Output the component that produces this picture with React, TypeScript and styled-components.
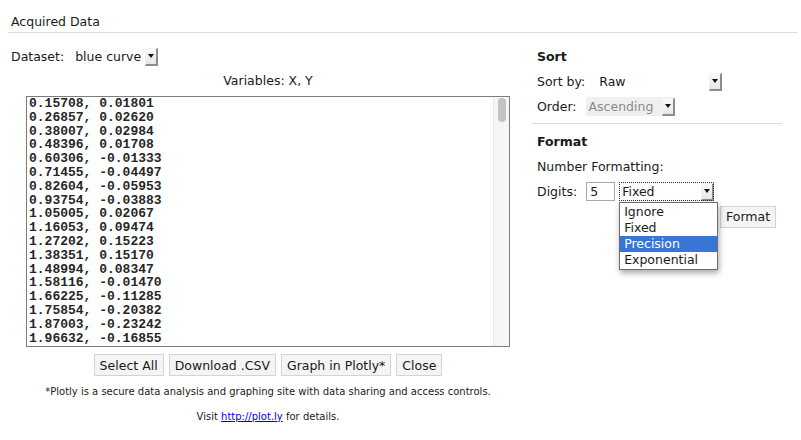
import React from 'react'
import styled, { createGlobalStyle } from 'styled-components'

const GlobalStyle = createGlobalStyle`
  html, body {
    margin: 0;
    padding: 0;
    background: #ffffff;
  }
  body {
    font-family: "DejaVu Sans", Verdana, sans-serif;
    font-size: 12.5px;
    color: #1a1a1a;
  }
`

const Page = styled.div`
  width: 801px;
  height: 440px;
  padding: 0 4px 0 8px;
  box-sizing: border-box;
  overflow: hidden;
`

const Title = styled.div`
  height: 33px;
  line-height: 16px;
  padding: 14px 3px 0;
  box-sizing: border-box;
  border-bottom: 1px solid #dcdcdc;
`

const Columns = styled.div`
  display: flex;
`

const LeftColumn = styled.div`
  width: 520px;
  display: flex;
  flex-direction: column;
`

const RightColumn = styled.div`
  width: 250px;
  margin-left: 4px;
  display: flex;
  flex-direction: column;
`

const FieldRow = styled.div<{ indent?: number; top?: number }>`
  display: flex;
  align-items: center;
  height: 25px;
  margin-top: ${p => p.top ?? 0}px;
  padding-left: ${p => p.indent ?? 0}px;
`

const Label = styled.span<{ gap?: number }>`
  margin-right: ${p => p.gap ?? 7}px;
`

const SelectBox = styled.div<{ width: number; disabled?: boolean; focused?: boolean }>`
  position: relative;
  display: flex;
  align-items: center;
  justify-content: space-between;
  width: ${p => p.width}px;
  height: 19px;
  box-sizing: border-box;
  padding-left: 3px;
  background: ${p => (p.disabled ? '#efefef' : 'transparent')};
  color: ${p => (p.disabled ? '#8a8a8a' : '#1a1a1a')};
  outline: ${p => (p.focused ? '1px dotted #333' : 'none')};
  outline-offset: -1px;
`

const ArrowButton = styled.span`
  width: 13px;
  height: 18px;
  box-sizing: border-box;
  background: linear-gradient(#fafafa, #e6e6e6);
  border-right: 2px solid #8c8c8c;
  border-bottom: 2px solid #8c8c8c;
  border-top: 1px solid #f2f2f2;
  border-left: 1px solid #f2f2f2;
  display: flex;
  align-items: center;
  justify-content: center;

  &::after {
    content: '';
    border-left: 3px solid transparent;
    border-right: 3px solid transparent;
    border-top: 4px solid #111;
  }
`

const Caption = styled.div`
  text-align: center;
  height: 23px;
  line-height: 23px;
`

const DataBox = styled.div`
  margin: 4px 0 0 18px;
  width: 484px;
  height: 251px;
  box-sizing: border-box;
  border: 1px solid #7d7d7d;
  display: flex;
  overflow: hidden;
`

const DataText = styled.pre`
  flex: 1;
  margin: 0;
  padding: 0 0 0 2px;
  font-family: "Liberation Mono", "Courier New", monospace;
  font-size: 13px;
  font-weight: bold;
  line-height: 13.8px;
  color: #262626;
  overflow: hidden;
`

const ScrollTrack = styled.div`
  width: 15px;
  background: #f6f6f6;
  border-left: 1px solid #e6e6e6;
  display: flex;
  justify-content: center;
  padding-top: 1px;
`

const ScrollThumb = styled.div`
  width: 8px;
  height: 24px;
  border-radius: 4px;
  background: #c3c3c3;
`

const ButtonRow = styled.div`
  display: flex;
  justify-content: center;
  gap: 5px;
  margin-top: 7px;
`

const PlainButton = styled.button`
  height: 22px;
  padding: 0 5px;
  background: #f4f4f4;
  border: 1px solid #d4d4d4;
  border-radius: 0;
  font-family: "DejaVu Sans", Verdana, sans-serif;
  font-size: 12.5px;
  color: #1a1a1a;
`

const Note = styled.div<{ top: number }>`
  text-align: center;
  font-size: 10px;
  margin-top: ${p => p.top}px;
  line-height: 13px;
`

const Link = styled.a`
  color: #0000ee;
  text-decoration: underline;
`

const Heading = styled.div<{ top: number }>`
  font-weight: bold;
  margin-top: ${p => p.top}px;
  padding-left: 5px;
  height: 25px;
  line-height: 25px;
`

const Divider = styled.div`
  margin-top: 4px;
  border-top: 1px solid #dcdcdc;
`

const DigitsInput = styled.div`
  width: 29px;
  height: 19px;
  box-sizing: border-box;
  border: 1px solid #a8a8a8;
  padding-left: 3px;
  line-height: 17px;
  margin-right: 4px;
`

const DropList = styled.ul`
  position: absolute;
  left: 0;
  top: 20px;
  z-index: 5;
  width: 97px;
  margin: 0;
  padding: 1px 0;
  list-style: none;
  background: #fff;
  border: 1px solid #6e6e6e;
  box-shadow: 1px 3px 6px rgba(0, 0, 0, 0.35);
`

const DropItem = styled.li<{ active?: boolean }>`
  height: 16px;
  line-height: 16px;
  padding-left: 4px;
  background: ${p => (p.active ? '#3875d7' : 'transparent')};
  color: ${p => (p.active ? '#ffffff' : '#1a1a1a')};
`

const data = [
  '0.15708, 0.01801',
  '0.26857, 0.02620',
  '0.38007, 0.02984',
  '0.48396, 0.01708',
  '0.60306, -0.01333',
  '0.71455, -0.04497',
  '0.82604, -0.05953',
  '0.93754, -0.03883',
  '1.05005, 0.02067',
  '1.16053, 0.09474',
  '1.27202, 0.15223',
  '1.38351, 0.15170',
  '1.48994, 0.08347',
  '1.58116, -0.01470',
  '1.66225, -0.11285',
  '1.75854, -0.20382',
  '1.87003, -0.23242',
  '1.96632, -0.16855',
]

const formats = ['Ignore', 'Fixed', 'Precision', 'Exponential']

export default function App() {
  return (
    <Page>
      <GlobalStyle />
      <Title>Acquired Data</Title>
      <Columns>
        <LeftColumn>
          <FieldRow indent={3} top={11}>
            <Label gap={8}>Dataset:</Label>
            <SelectBox width={86}>
              blue curve
              <ArrowButton />
            </SelectBox>
          </FieldRow>
          <Caption>Variables: X, Y</Caption>
          <DataBox>
            <DataText>{data.join('\n')}</DataText>
            <ScrollTrack>
              <ScrollThumb />
            </ScrollTrack>
          </DataBox>
          <ButtonRow>
            <PlainButton>Select All</PlainButton>
            <PlainButton>Download .CSV</PlainButton>
            <PlainButton>Graph in Plotly*</PlainButton>
            <PlainButton>Close</PlainButton>
          </ButtonRow>
          <Note top={9}>
            *Plotly is a secure data analysis and graphing site with data sharing and access controls.
          </Note>
          <Note top={12}>
            Visit <Link href="#">http://plot.ly</Link> for details.
          </Note>
        </LeftColumn>
        <RightColumn>
          <Heading top={11}>Sort</Heading>
          <FieldRow indent={5}>
            <Label gap={11}>Sort by:</Label>
            <SelectBox width={126}>
              Raw
              <ArrowButton />
            </SelectBox>
          </FieldRow>
          <FieldRow indent={5}>
            <Label gap={9}>Order:</Label>
            <SelectBox width={89} disabled>
              Ascending
              <ArrowButton />
            </SelectBox>
          </FieldRow>
          <Divider />
          <Heading top={5}>Format</Heading>
          <FieldRow indent={5}>Number Formatting:</FieldRow>
          <FieldRow indent={5}>
            <Label gap={9}>Digits:</Label>
            <DigitsInput>5</DigitsInput>
            <SelectBox width={95} focused>
              Fixed
              <ArrowButton />
              <DropList>
                {formats.map(f => (
                  <DropItem key={f} active={f === 'Precision'}>
                    {f}
                  </DropItem>
                ))}
              </DropList>
            </SelectBox>
          </FieldRow>
          <FieldRow indent={188}>
            <PlainButton>Format</PlainButton>
          </FieldRow>
        </RightColumn>
      </Columns>
    </Page>
  )
}
